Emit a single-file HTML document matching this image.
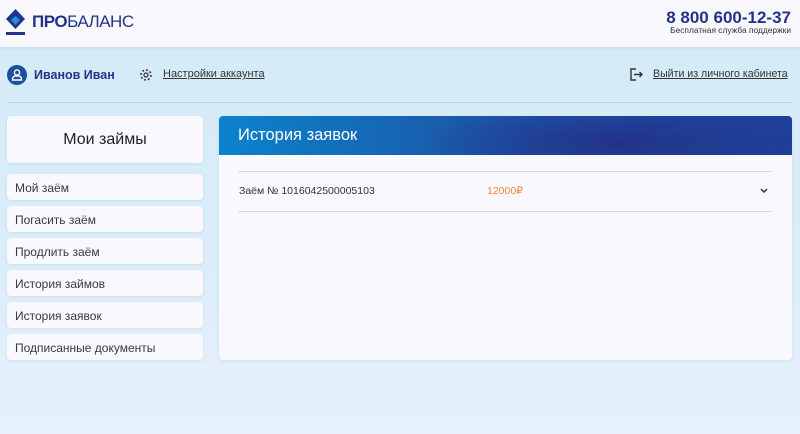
<!DOCTYPE html>
<html><head><meta charset="utf-8"><style>
*{margin:0;padding:0;box-sizing:border-box}
body{width:800px;height:434px;overflow:hidden;font-family:"Liberation Sans",sans-serif;background:linear-gradient(180deg,#d3eaf8 0%,#dcedf9 60%,#e6f1fb 100%);position:relative;color:#333}
.hdr{position:absolute;left:0;top:0;width:800px;height:47px;background:#f8f8fd;box-shadow:0 1px 3px rgba(0,0,0,.08)}
.abs{position:absolute}
.card{position:absolute;background:#f8f8fd;border-radius:4px;box-shadow:0 1px 3px rgba(100,140,180,.15)}
.item{left:7px;width:196px;height:26px;font-size:12px;color:#3a3a3a;padding:7px 0 0 8px}
a{color:#333;text-decoration:underline}
</style></head><body>
<div class="hdr">
 <svg class="abs" style="left:6px;top:9px" width="19" height="27" viewBox="0 0 19 27"><path d="M9.5 0L19 10L9.5 20L0 10Z" fill="#23338a"/><path d="M9.5 7L14 11L9.5 16L5 11Z" fill="#1e8fd8"/><rect x="0" y="23" width="19" height="3" fill="#23338a"/></svg>
 <div class="abs" style="left:32px;top:12px;font-size:17px;color:#23338a;letter-spacing:-0.5px"><b>ПРО</b>БАЛАНС</div>
 <div class="abs" style="right:9px;top:8px;font-size:17px;font-weight:bold;color:#23338a">8 800 600-12-37</div>
 <div class="abs" style="right:9px;top:25px;font-size:8.4px;color:#333">Бесплатная служба поддержки</div>
</div>
<svg class="abs" style="left:7px;top:65px" width="20" height="20" viewBox="0 0 20 20"><circle cx="10" cy="10" r="10" fill="#1c4fa0"/><circle cx="10" cy="7.5" r="2.6" fill="none" stroke="#fff" stroke-width="1.4"/><path d="M5.5 15v-1a3 3 0 0 1 3-3h3a3 3 0 0 1 3 3v1z" fill="none" stroke="#fff" stroke-width="1.4"/></svg>
<div class="abs" style="left:34px;top:68px;font-size:12.5px;font-weight:bold;color:#23338a">Иванов Иван</div>
<svg class="abs" style="left:139px;top:68px" width="14" height="14" viewBox="0 0 14 14"><circle cx="7" cy="7" r="2" fill="none" stroke="#333" stroke-width="1.3"/><circle cx="7" cy="7" r="5" fill="none" stroke="#333" stroke-width="1.5" stroke-dasharray="2 1.9"/></svg>
<div class="abs" style="left:163px;top:68px;font-size:11px"><a>Настройки аккаунта</a></div>
<svg class="abs" style="left:629px;top:68px" width="14" height="13" viewBox="0 0 14 13"><path d="M7 1H2v11h5M5 6.5h8M10.5 4l2.5 2.5-2.5 2.5" fill="none" stroke="#333" stroke-width="1.4"/></svg>
<div class="abs" style="left:653px;top:68px;font-size:10.6px"><a>Выйти из личного кабинета</a></div>
<div class="abs" style="left:7px;top:102px;width:785px;height:1px;background:#b7d3e6"></div>
<div class="card" style="left:7px;top:116px;width:196px;height:47px;text-align:center;padding-top:15px;font-size:16px;color:#222">Мои займы</div>
<div class="card item" style="top:174px">Мой заём</div>
<div class="card item" style="top:206px">Погасить заём</div>
<div class="card item" style="top:238px">Продлить заём</div>
<div class="card item" style="top:270px">История займов</div>
<div class="card item" style="top:302px">История заявок</div>
<div class="card item" style="top:334px">Подписанные документы</div>
<div class="card" style="left:219px;top:116px;width:573px;height:244px;overflow:hidden">
 <div style="height:39px;background:radial-gradient(ellipse 200px 40px at 400px 27px,#22328a,transparent),linear-gradient(90deg,#0b83cc,#1c58a8 45%,#1f3f98);color:#fff;font-size:16.5px;padding:10px 0 0 19px">История заявок</div>
 <div class="abs" style="left:19px;top:55px;width:535px;height:1px;background:#d8d8dc"></div>
 <div class="abs" style="left:20px;top:69px;font-size:10.5px;color:#333">Заём № 1016042500005103</div>
 <div class="abs" style="left:268px;top:69px;font-size:10.5px;color:#e88a3c">12000₽</div>
 <svg class="abs" style="left:541px;top:72px" width="8" height="6" viewBox="0 0 8 6"><path d="M1 1l3 3 3-3" fill="none" stroke="#333" stroke-width="1.5"/></svg>
 <div class="abs" style="left:19px;top:95px;width:535px;height:1px;background:#d8d8dc"></div>
</div>
</body></html>
